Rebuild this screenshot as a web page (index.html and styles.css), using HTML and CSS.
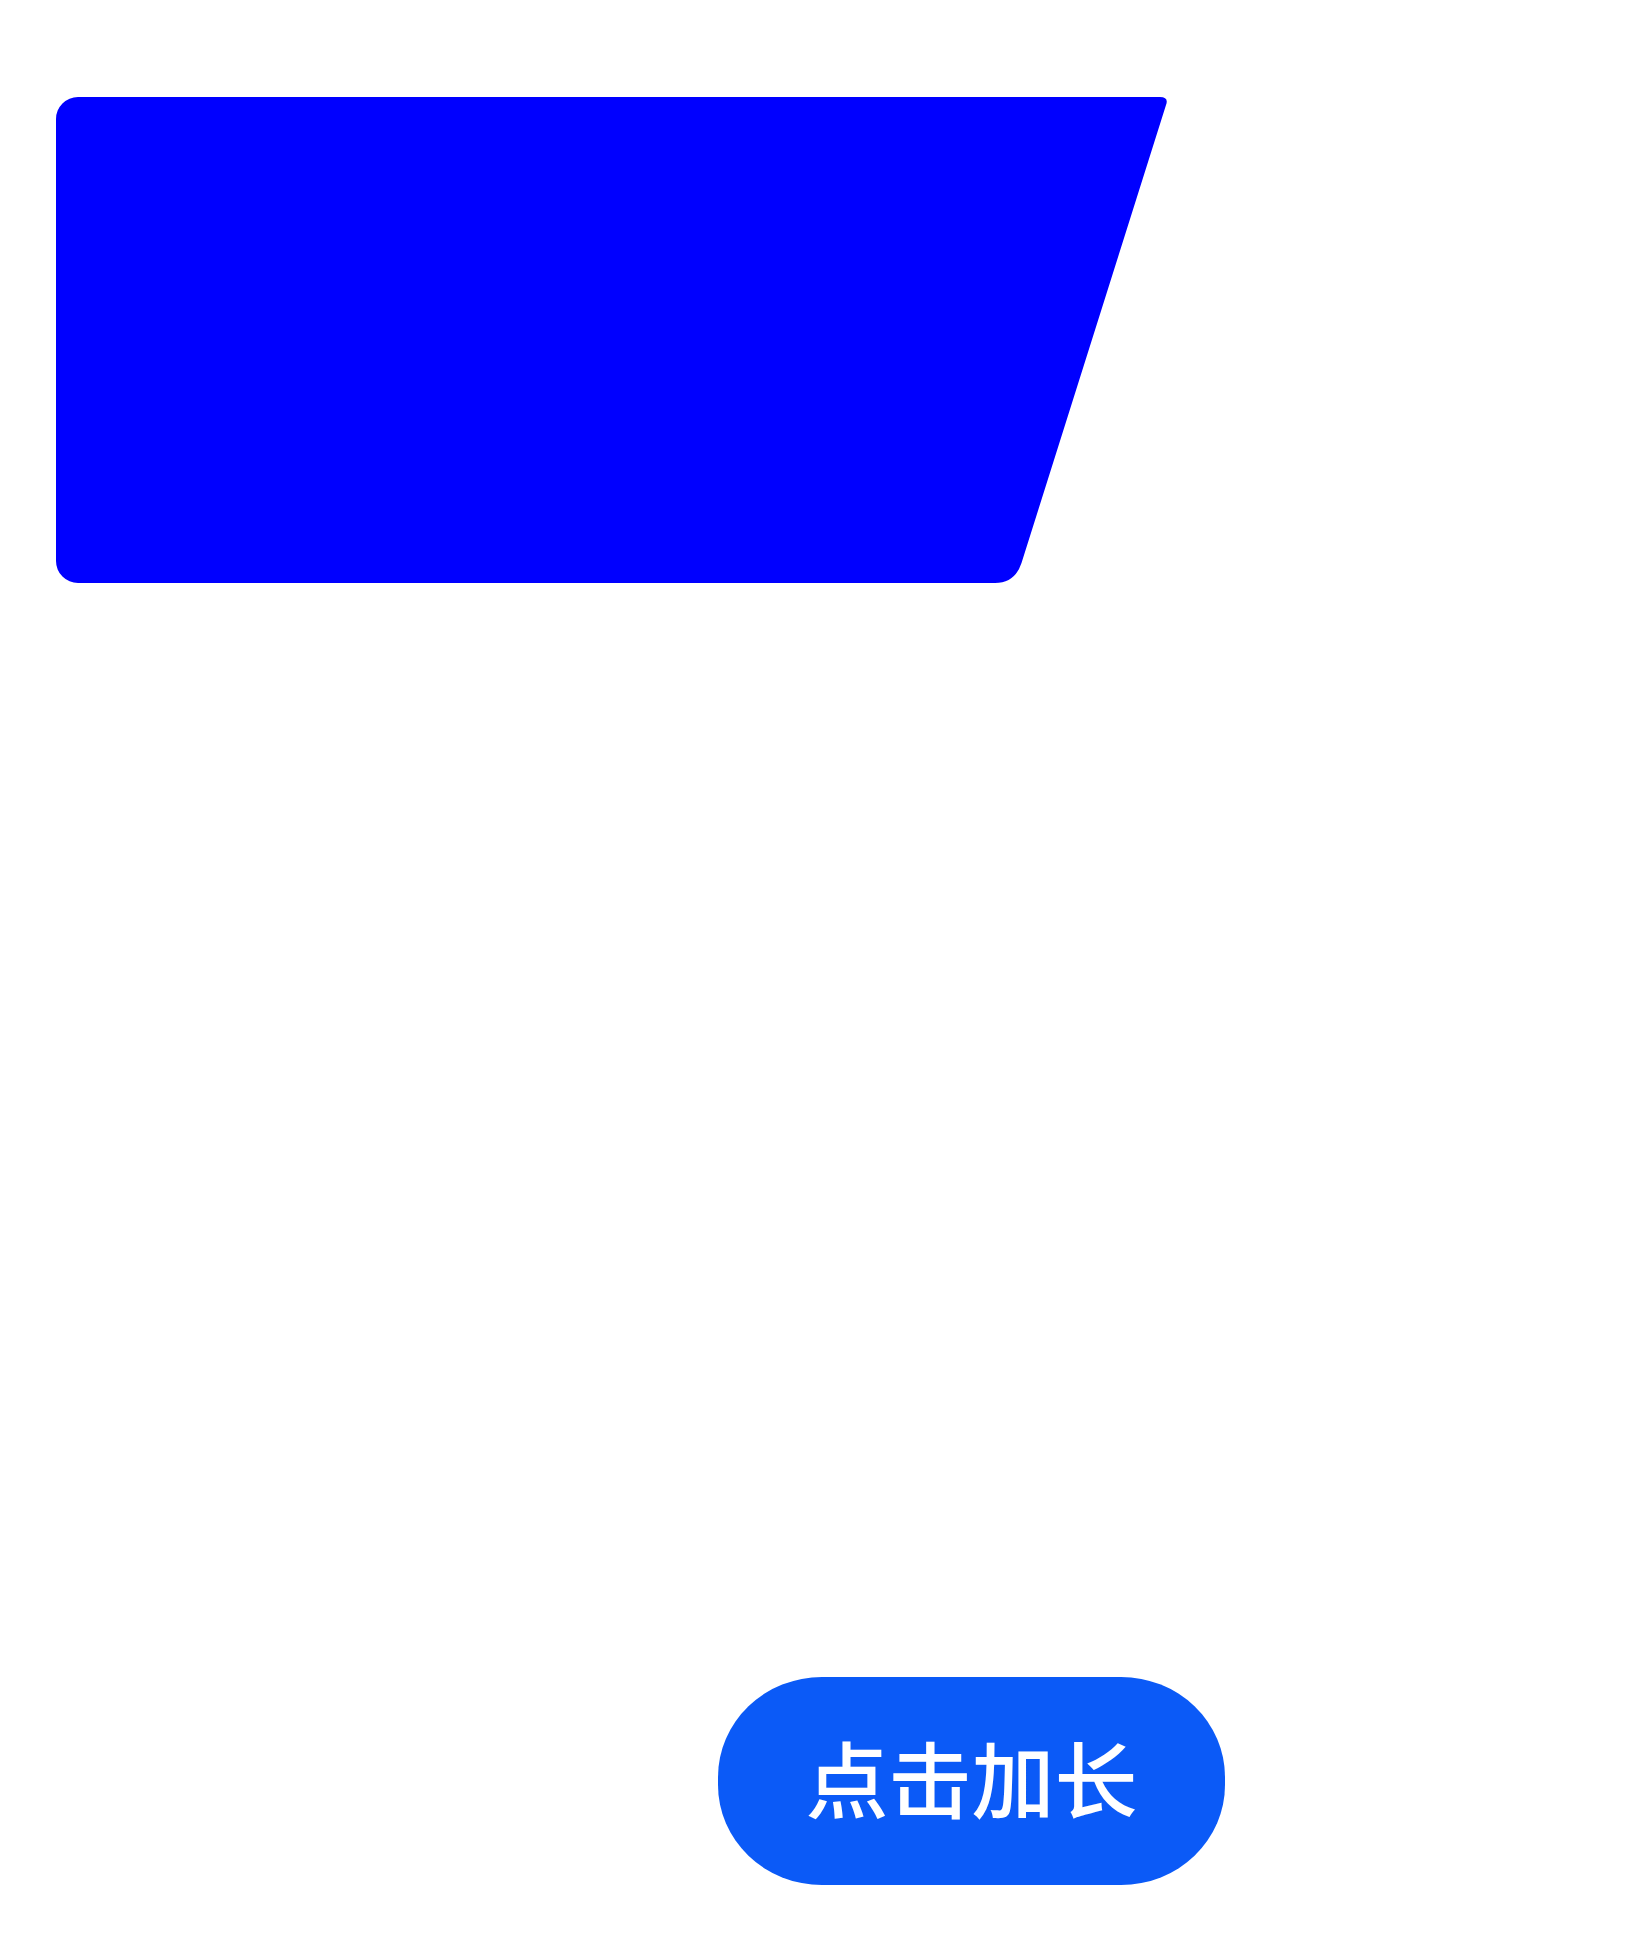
FILE: index.html
```html
<!DOCTYPE html>
<html lang="zh">
<head>
<meta charset="utf-8">
<link rel="stylesheet" href="styles.css">
</head>
<body>
<div class="page">
  <div class="shape-wrap">
    <svg class="shape" width="1112" height="486" viewBox="0 0 1112 486">
      <path d="M22 0 L1104 0 Q1113 0 1110 8 L965.5 466 Q959 486 939 486 L22 486 A22 22 0 0 1 0 464 L0 22 A22 22 0 0 1 22 0 Z" fill="#0000ff"/>
    </svg>
  </div>
  <div class="btn-row">
    <button class="btn">点击加长</button>
  </div>
</div>
</body>
</html>
```

FILE: styles.css
```css
html, body {
  margin: 0;
  padding: 0;
  background: #ffffff;
}
.page {
  width: 1638px;
  height: 1946px;
  display: flex;
  flex-direction: column;
  padding-top: 97px;
  box-sizing: border-box;
}
.shape-wrap {
  padding-left: 56px;
  height: 486px;
}
.shape {
  display: block;
}
.btn-row {
  margin-top: 1094px;
  padding-left: 718px;
}
.btn {
  width: 507px;
  height: 208px;
  border: none;
  border-radius: 104px / 100px;
  background: #0b5af7;
  color: #ffffff;
  font-family: "Noto Sans CJK SC", "Noto Sans", sans-serif;
  font-size: 83px;
  font-weight: 500;
  line-height: 1;
  padding: 0 0 10px 0;
  display: flex;
  align-items: center;
  justify-content: center;
}
```
